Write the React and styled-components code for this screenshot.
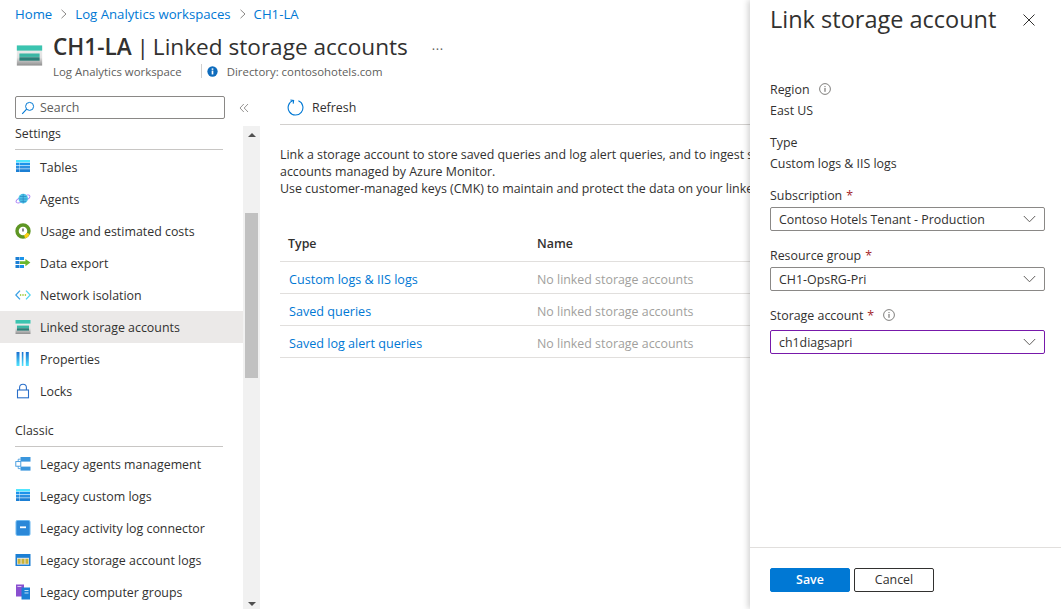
import React from 'react';
import styled, { createGlobalStyle } from 'styled-components';

const GlobalStyle = createGlobalStyle`
  html, body, #root {
    height: 100%;
    margin: 0;
  }
  body {
    overflow: hidden;
    background: #fff;
    color: #323130;
    font-family: 'Open Sans', 'Noto Sans', 'Liberation Sans', sans-serif;
    font-size: 12.4px;
  }
`;

const Page = styled.div`
  display: flex;
  height: 609px;
  overflow: hidden;
`;

const Main = styled.div`
  width: 750px;
  flex: none;
  display: flex;
  flex-direction: column;
  overflow: hidden;
`;

const Breadcrumbs = styled.nav`
  display: flex;
  align-items: center;
  box-sizing: border-box;
  height: 29px;
  padding: 0 0 2px 15px;
  flex: none;
  font-size: 13.2px;
`;

const Crumb = styled.a`
  color: #0078d4;
`;

const CrumbSep = styled.svg`
  width: 8px;
  height: 10px;
  margin: 0 7px 0 8px;
`;

const Header = styled.header`
  display: flex;
  height: 67px;
  flex: none;
  padding-left: 16px;
`;

const HeaderIcon = styled.svg`
  width: 27px;
  height: 23px;
  margin: 15px 10px 0 0;
  flex: none;
`;

const HeaderText = styled.div`
  display: flex;
  flex-direction: column;
`;

const TitleRow = styled.div`
  display: flex;
  align-items: center;
  height: 36px;
  margin-top: -1px;
`;

const Title = styled.h1`
  margin: 0;
  font-size: 22.6px;
  font-weight: 400;
  white-space: nowrap;
  color: #323130;
`;

const TitleName = styled.span`
  font-weight: 600;
  margin-right: -1px;
`;

const TitleBar = styled.span`
  margin-right: -2px;
`;

const MoreDots = styled.span`
  margin: 6px 0 0 24px;
  color: #605e5c;
  font-size: 13px;
  letter-spacing: 0.5px;
  line-height: 1;
`;

const SubRow = styled.div`
  display: flex;
  align-items: center;
  font-size: 11.4px;
  color: #605e5c;
  height: 14px;
  white-space: nowrap;
`;

const SubDivider = styled.span`
  width: 1px;
  height: 14px;
  background: #d2d0ce;
  margin: 0 5px 0 19px;
`;

const DirInfo = styled.svg`
  width: 11px;
  height: 11px;
  margin-right: 9px;
`;

const Body = styled.div`
  display: flex;
  flex: 1;
  min-height: 0;
`;

const Sidebar = styled.aside`
  width: 260px;
  flex: none;
  display: flex;
  flex-direction: column;
  min-height: 0;
`;

const SearchRow = styled.div`
  display: flex;
  align-items: center;
  height: 23px;
  flex: none;
  padding: 0 0 0 15px;
`;

const SearchBox = styled.div`
  width: 210px;
  height: 23px;
  box-sizing: border-box;
  border: 1px solid #8a8886;
  border-radius: 2px;
  display: flex;
  align-items: center;
  padding-left: 5px;
  color: #605e5c;
`;

const SearchGlyph = styled.svg`
  width: 14px;
  height: 14px;
  margin-right: 5px;
`;

const Collapse = styled.svg`
  width: 10px;
  height: 10px;
  margin-left: 14px;
`;

const SideBody = styled.div`
  display: flex;
  flex: 1;
  min-height: 0;
  margin-top: 7px;
`;

const Nav = styled.div`
  width: 243px;
  flex: none;
  overflow: hidden;
`;

const SectionTitle = styled.div`
  height: 18px;
  line-height: 18px;
  margin: ${p => (p.$first ? '-1px' : '15px')} 20px 0 15px;
  color: #323130;
`;

const SectionRule = styled.div`
  height: 1px;
  background: #c8c6c4;
  margin: 6px 20px 1px 15px;
`;

const Item = styled.div`
  display: flex;
  align-items: center;
  height: 32px;
  padding-left: 15px;
  white-space: nowrap;
  background: ${p => (p.$active ? '#ebe9e8' : 'transparent')};
`;

const ItemIcon = styled.svg`
  width: 16px;
  height: 16px;
  margin-right: 9px;
  flex: none;
`;

const Scrollbar = styled.div`
  width: 17px;
  flex: none;
  background: #f1f1f1;
  display: flex;
  flex-direction: column;
  align-items: center;
`;

const ScrollArrow = styled.div`
  width: 0;
  height: 0;
  flex: none;
  border-left: 4px solid transparent;
  border-right: 4px solid transparent;
  ${p => (p.$down
    ? 'border-top: 4px solid #505050; margin-top: auto; margin-bottom: 3px;'
    : 'border-bottom: 4px solid #505050; margin-top: 7px;')}
`;

const ScrollThumb = styled.div`
  width: 13px;
  height: 165px;
  background: #c1c1c1;
  margin-top: 76px;
  flex: none;
`;

const Content = styled.main`
  flex: 1;
  min-width: 0;
  padding-left: 20px;
  display: flex;
  flex-direction: column;
`;

const CommandBar = styled.div`
  display: flex;
  align-items: center;
  height: 23px;
  padding: 0 0 5px 7px;
  border-bottom: 1px solid #d2d0ce;
  flex: none;
`;

const RefreshGlyph = styled.svg`
  width: 17px;
  height: 17px;
  margin-right: 8px;
`;

const Intro = styled.div`
  margin-top: 21px;
  line-height: 17px;
  white-space: nowrap;
`;

const Table = styled.div`
  margin-top: 29px;
`;

const Row = styled.div`
  display: grid;
  grid-template-columns: 249px 1fr;
  align-items: center;
  box-sizing: border-box;
  height: ${p => (p.$head ? '36px' : '32px')};
  padding: ${p => (p.$head ? '0' : '3px')} 0 0 8px;
  border-bottom: 1px solid #e1dfdd;
`;

const HeadCell = styled.div`
  font-weight: 600;
`;

const LinkCell = styled.a`
  color: #0078d4;
  padding-left: 1px;
  font-size: 12.6px;
`;

const EmptyCell = styled.div`
  color: #a19f9d;
`;

const Panel = styled.section`
  flex: 1;
  min-width: 0;
  display: flex;
  flex-direction: column;
  background: #fff;
  box-shadow: -2px 0 6px rgba(0, 0, 0, 0.18);
  position: relative;
`;

const PanelHead = styled.div`
  display: flex;
  align-items: center;
  justify-content: space-between;
  height: 40px;
  padding: 0 26px 0 20px;
  flex: none;
`;

const PanelTitle = styled.h2`
  margin: 0;
  font-size: 23.5px;
  font-weight: 400;
  white-space: nowrap;
  position: relative;
  top: -1px;
`;

const CloseGlyph = styled.svg`
  width: 12px;
  height: 12px;
`;

const PanelBody = styled.div`
  flex: 1;
  padding: 39px 16px 0 20px;
`;

const Field = styled.div`
  margin-bottom: ${p => p.$gap || '11px'};
`;

const Label = styled.div`
  display: flex;
  align-items: center;
  height: 20px;
  gap: 4px;
`;

const Star = styled.span`
  color: #a4262c;
`;

const Info = styled.svg`
  width: 12px;
  height: 12px;
  margin-left: 5px;
`;

const Value = styled.div`
  height: 20px;
  line-height: 20px;
  margin-top: 2px;
`;

const Select = styled.div`
  height: 24px;
  box-sizing: border-box;
  display: flex;
  align-items: center;
  justify-content: space-between;
  padding: 0 8px;
  margin-top: ${p => p.$top || '2px'};
  border-radius: 2px;
  border: 1px solid ${p => (p.$focus ? '#7719aa' : '#8a8886')};
`;

const Chevron = styled.svg`
  width: 13px;
  height: 8px;
`;

const PanelFoot = styled.div`
  height: 62px;
  box-sizing: border-box;
  flex: none;
  border-top: 1px solid #e1dfdd;
  display: flex;
  gap: 4px;
  padding: 20px 0 0 20px;
`;

const Button = styled.button`
  width: 80px;
  height: 24px;
  padding: 0 0 1px;
  border-radius: 2px;
  font: inherit;
  font-weight: ${p => (p.$primary ? 600 : 400)};
  color: ${p => (p.$primary ? '#fff' : '#323130')};
  background: ${p => (p.$primary ? '#0078d4' : '#fff')};
  border: 1px solid ${p => (p.$primary ? '#0078d4' : '#323130')};
`;

const StorageIcon = ({ as: Comp = ItemIcon }) => (
  <Comp viewBox="0 0 16 16" preserveAspectRatio="none">
    <defs>
      <linearGradient id="stg" x1="0" y1="0" x2="0" y2="1">
        <stop offset="0" stopColor="#f2f2f2" />
        <stop offset="0.6" stopColor="#e0e0e0" />
        <stop offset="1" stopColor="#8f8f8f" />
      </linearGradient>
    </defs>
    <rect x="0.5" y="1" width="15" height="14" fill="url(#stg)" />
    <rect x="0.5" y="1" width="15" height="3.6" fill="#3bc4b0" />
    <rect x="2" y="6.6" width="12" height="2.4" fill="#3bb6a4" />
    <rect x="2" y="9.2" width="12" height="2.4" fill="#2a7f78" />
  </Comp>
);

const TableIcon = () => (
  <ItemIcon viewBox="0 0 16 16">
    <rect x="1" y="1" width="14" height="2.4" fill="#50e6ff" />
    <rect x="1" y="3.8" width="3.6" height="2.6" fill="#1b93eb" />
    <rect x="5" y="3.8" width="10" height="2.6" fill="#1b93eb" />
    <rect x="1" y="7" width="3.6" height="2.6" fill="#2a8fe0" />
    <rect x="5" y="7" width="10" height="2.6" fill="#2a8fe0" />
    <rect x="1" y="10.2" width="3.6" height="2.8" fill="#1b7fd4" />
    <rect x="5" y="10.2" width="10" height="2.8" fill="#1b7fd4" />
  </ItemIcon>
);

const AgentsIcon = () => (
  <ItemIcon viewBox="0 0 16 16">
    <ellipse cx="8" cy="8" rx="7.5" ry="2.6" transform="rotate(-25 8 8)" fill="none" stroke="#a67af4" strokeWidth="0.9" />
    <circle cx="8.2" cy="7.6" r="4.8" fill="#4fc3e8" />
    <path d="M5 5.5h6.4M4.6 8h7.2M5.4 10.4h5.6" stroke="#2b8cc4" strokeWidth="0.8" />
    <path d="M8.2 3v9.2" stroke="#2b8cc4" strokeWidth="0.8" />
  </ItemIcon>
);

const UsageIcon = () => (
  <ItemIcon viewBox="0 0 16 16">
    <circle cx="8" cy="8" r="6" fill="#fff" stroke="#5e9624" strokeWidth="3.4" />
    <path d="M13.2 10.4A6 6 0 0 1 9.6 13.8" fill="none" stroke="#fcd116" strokeWidth="3.4" />
    <path d="M8 5.4V8.6" stroke="#3b3b3b" strokeWidth="1.2" />
  </ItemIcon>
);

const ExportIcon = () => (
  <ItemIcon viewBox="0 0 16 16">
    <rect x="0.5" y="2" width="4" height="3" fill="#1b7fd4" />
    <rect x="5" y="2" width="4" height="3" fill="#1b93eb" />
    <rect x="0.5" y="6" width="4" height="3" fill="#1b7fd4" />
    <rect x="0.5" y="10" width="4" height="3" fill="#1b7fd4" />
    <rect x="5" y="10" width="4" height="3" fill="#1b93eb" />
    <path d="M5 6.2h5.4V4l5 3.6-5 3.6V9H5z" fill="#6bb82e" />
  </ItemIcon>
);

const NetworkIcon = () => (
  <ItemIcon viewBox="0 0 16 16">
    <path d="M5 3.6 0.8 8 5 12.4" fill="none" stroke="#3aa0e6" strokeWidth="1.3" />
    <path d="M11 3.6 15.2 8 11 12.4" fill="none" stroke="#50d4f0" strokeWidth="1.3" />
    <circle cx="5.6" cy="8" r="0.8" fill="#7fba00" />
    <circle cx="8" cy="8" r="0.8" fill="#7fba00" />
    <circle cx="10.4" cy="8" r="0.8" fill="#7fba00" />
  </ItemIcon>
);

const PropertiesIcon = () => (
  <ItemIcon viewBox="0 0 16 16">
    <defs>
      <linearGradient id="prop" x1="0" y1="0" x2="0" y2="1">
        <stop offset="0" stopColor="#1b6fd0" />
        <stop offset="1" stopColor="#50e6ff" />
      </linearGradient>
    </defs>
    <rect x="1.5" y="1" width="3" height="14" fill="url(#prop)" />
    <rect x="6.8" y="1" width="1.6" height="14" fill="url(#prop)" />
    <rect x="10.8" y="1" width="3" height="14" fill="url(#prop)" />
  </ItemIcon>
);

const LockIcon = () => (
  <ItemIcon viewBox="0 0 16 16">
    <path d="M4.6 7V4.6a3.4 3.4 0 0 1 6.8 0V7" fill="none" stroke="#2a6fc9" strokeWidth="1.1" />
    <rect x="2.5" y="7" width="11" height="7.8" fill="#fff" stroke="#2a6fc9" strokeWidth="1.1" />
  </ItemIcon>
);

const LegacyAgentsIcon = () => (
  <ItemIcon viewBox="0 0 16 16">
    <rect x="5.5" y="1" width="10" height="4.6" fill="#3a96dd" />
    <rect x="0.8" y="5.6" width="5" height="4.6" fill="#fff" stroke="#3a96dd" strokeWidth="0.9" />
    <rect x="5.5" y="10.6" width="10" height="4" fill="#3a96dd" />
    <path d="M5.5 3.2H3.2v2.4M3.2 10.2v2.4h2.3" fill="none" stroke="#3a96dd" strokeWidth="0.8" />
  </ItemIcon>
);

const ConnectorIcon = () => (
  <ItemIcon viewBox="0 0 16 16">
    <rect x="1" y="0.5" width="14" height="15" rx="1.4" fill="#2b88d8" />
    <rect x="1" y="0.5" width="14" height="15" rx="1.4" fill="none" stroke="#6cb8f0" />
    <rect x="5" y="6.4" width="6" height="1.8" fill="#fff" />
  </ItemIcon>
);

const StorageLogsIcon = () => (
  <ItemIcon viewBox="0 0 16 16">
    <rect x="0.5" y="2" width="15" height="12" fill="#1b7fd4" />
    <rect x="2" y="5.8" width="12" height="6.8" fill="#e8e8e8" />
    <rect x="2.6" y="6.8" width="3" height="5" fill="#c8b23a" />
    <rect x="6.5" y="6.8" width="3" height="5" fill="#c8b23a" />
    <rect x="10.4" y="6.8" width="3" height="5" fill="#c8b23a" />
  </ItemIcon>
);

const ComputerGroupsIcon = () => (
  <ItemIcon viewBox="0 0 16 16">
    <rect x="1" y="0.5" width="8" height="12" fill="#8a4fd0" />
    <rect x="2.4" y="2" width="4" height="1" fill="#d9c4f2" />
    <rect x="6.5" y="3.5" width="8.5" height="12" fill="#1b7fd4" />
    <rect x="9.5" y="6" width="4" height="1" fill="#bfe0f7" />
    <rect x="9.5" y="8.5" width="4" height="1" fill="#bfe0f7" />
  </ItemIcon>
);

const settings = [
  ['Tables', TableIcon],
  ['Agents', AgentsIcon],
  ['Usage and estimated costs', UsageIcon],
  ['Data export', ExportIcon],
  ['Network isolation', NetworkIcon],
  ['Linked storage accounts', StorageIcon],
  ['Properties', PropertiesIcon],
  ['Locks', LockIcon],
];

const classic = [
  ['Legacy agents management', LegacyAgentsIcon],
  ['Legacy custom logs', TableIcon],
  ['Legacy activity log connector', ConnectorIcon],
  ['Legacy storage account logs', StorageLogsIcon],
  ['Legacy computer groups', ComputerGroupsIcon],
];

const rows = ['Custom logs & IIS logs', 'Saved queries', 'Saved log alert queries'];

const InfoIcon = () => (
  <Info viewBox="0 0 12 12">
    <circle cx="6" cy="6" r="5.4" fill="none" stroke="#605e5c" strokeWidth="0.8" />
    <rect x="5.5" y="5" width="1" height="3.8" fill="#605e5c" />
    <rect x="5.5" y="3.1" width="1" height="1" fill="#605e5c" />
  </Info>
);

const ChevronDown = () => (
  <Chevron viewBox="0 0 13 8">
    <path d="M0.8 1 6.5 6.8 12.2 1" fill="none" stroke="#605e5c" strokeWidth="1" />
  </Chevron>
);

const Sep = () => (
  <CrumbSep viewBox="0 0 8 10">
    <path d="M1.5 0.8 6 5 1.5 9.2" fill="none" stroke="#8a8886" strokeWidth="1" />
  </CrumbSep>
);

export default function App() {
  return (
    <Page>
      <GlobalStyle />
      <Main>
        <Breadcrumbs>
          <Crumb>Home</Crumb>
          <Sep />
          <Crumb>Log Analytics workspaces</Crumb>
          <Sep />
          <Crumb>CH1-LA</Crumb>
        </Breadcrumbs>
        <Header>
          <StorageIcon as={HeaderIcon} />
          <HeaderText>
            <TitleRow>
              <Title><TitleName>CH1-LA</TitleName> <TitleBar>|</TitleBar> Linked storage accounts</Title>
              <MoreDots>···</MoreDots>
            </TitleRow>
            <SubRow>
              Log Analytics workspace
              <SubDivider />
              <DirInfo viewBox="0 0 12 12">
                <circle cx="6" cy="6" r="5.6" fill="#0f6cbd" />
                <rect x="5.1" y="5" width="1.8" height="4.2" fill="#fff" />
                <rect x="5.1" y="2.6" width="1.8" height="1.6" fill="#fff" />
              </DirInfo>
              Directory: contosohotels.com
            </SubRow>
          </HeaderText>
        </Header>
        <Body>
          <Sidebar>
            <SearchRow>
              <SearchBox>
                <SearchGlyph viewBox="0 0 14 14">
                  <circle cx="8.6" cy="5.4" r="4" fill="none" stroke="#0078d4" strokeWidth="1" />
                  <path d="M5.6 8.2 1.2 12.8" stroke="#0078d4" strokeWidth="1.1" />
                </SearchGlyph>
                Search
              </SearchBox>
              <Collapse viewBox="0 0 10 10">
                <path d="M4.8 1 1 5l3.8 4M9 1 5.2 5 9 9" fill="none" stroke="#8a8886" strokeWidth="0.9" />
              </Collapse>
            </SearchRow>
            <SideBody>
              <Nav>
                <SectionTitle $first>Settings</SectionTitle>
                <SectionRule />
                {settings.map(([label, Icon]) => (
                  <Item key={label} $active={label === 'Linked storage accounts'}>
                    <Icon />
                    {label}
                  </Item>
                ))}
                <SectionTitle>Classic</SectionTitle>
                <SectionRule />
                {classic.map(([label, Icon]) => (
                  <Item key={label}>
                    <Icon />
                    {label}
                  </Item>
                ))}
              </Nav>
              <Scrollbar>
                <ScrollArrow />
                <ScrollThumb />
                <ScrollArrow $down />
              </Scrollbar>
            </SideBody>
          </Sidebar>
          <Content>
            <CommandBar>
              <RefreshGlyph viewBox="0 0 17 17">
                <path d="M6.2 1.6A7.4 7.4 0 1 0 11.4 1.8" fill="none" stroke="#0078d4" strokeWidth="1.1" />
                <path d="M3.4 1 6.6 1.4 6.2 4.6" fill="none" stroke="#0078d4" strokeWidth="1.1" />
              </RefreshGlyph>
              Refresh
            </CommandBar>
            <Intro>
              <div>Link a storage account to store saved queries and log alert queries, and to ingest s</div>
              <div>accounts managed by Azure Monitor.</div>
              <div>Use customer-managed keys (CMK) to maintain and protect the data on your linked</div>
            </Intro>
            <Table>
              <Row $head>
                <HeadCell>Type</HeadCell>
                <HeadCell>Name</HeadCell>
              </Row>
              {rows.map(label => (
                <Row key={label}>
                  <LinkCell>{label}</LinkCell>
                  <EmptyCell>No linked storage accounts</EmptyCell>
                </Row>
              ))}
            </Table>
          </Content>
        </Body>
      </Main>
      <Panel>
        <PanelHead>
          <PanelTitle>Link storage account</PanelTitle>
          <CloseGlyph viewBox="0 0 12 12">
            <path d="M0.5 0.5 11.5 11.5M11.5 0.5 0.5 11.5" stroke="#323130" strokeWidth="1" />
          </CloseGlyph>
        </PanelHead>
        <PanelBody>
          <Field>
            <Label>Region <InfoIcon /></Label>
            <Value>East US</Value>
          </Field>
          <Field>
            <Label>Type</Label>
            <Value>Custom logs &amp; IIS logs</Value>
          </Field>
          <Field $gap="14px">
            <Label>Subscription <Star>*</Star></Label>
            <Select>Contoso Hotels Tenant - Production <ChevronDown /></Select>
          </Field>
          <Field $gap="14px">
            <Label>Resource group <Star>*</Star></Label>
            <Select>CH1-OpsRG-Pri <ChevronDown /></Select>
          </Field>
          <Field>
            <Label>Storage account <Star>*</Star> <InfoIcon /></Label>
            <Select $focus $top="5px">ch1diagsapri <ChevronDown /></Select>
          </Field>
        </PanelBody>
        <PanelFoot>
          <Button $primary>Save</Button>
          <Button>Cancel</Button>
        </PanelFoot>
      </Panel>
    </Page>
  );
}
